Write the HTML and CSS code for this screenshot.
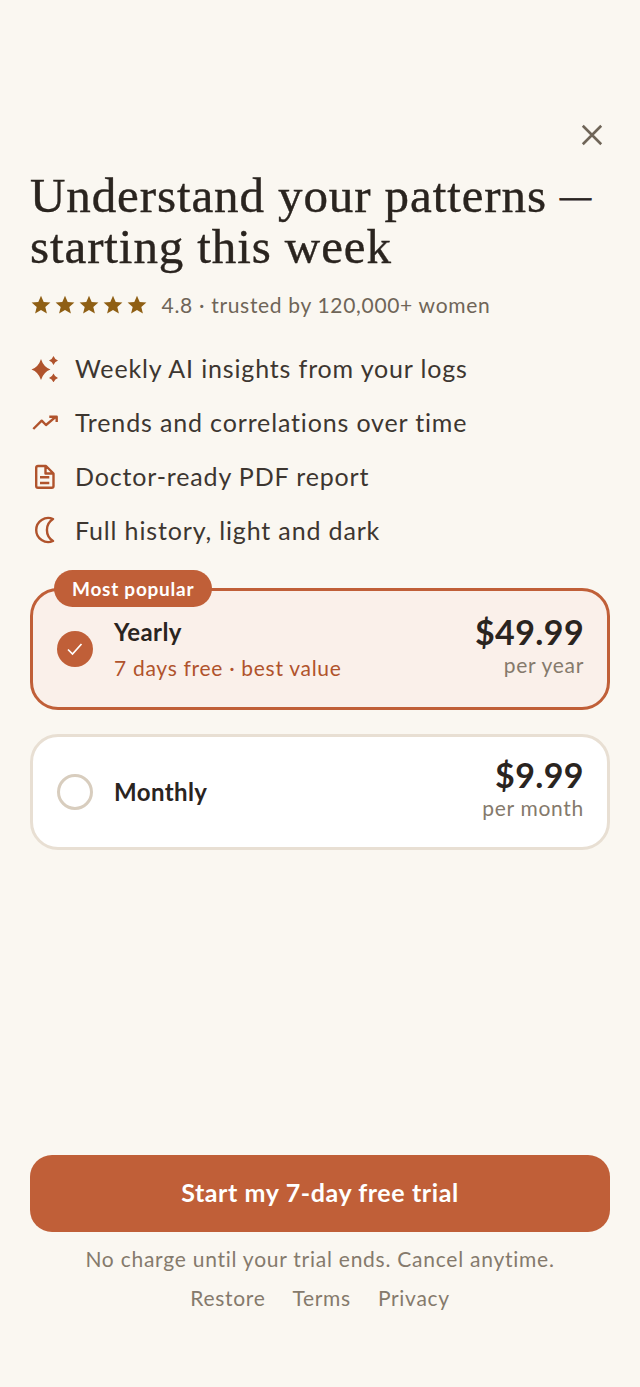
FILE: index.html
```html
<!DOCTYPE html>
<html>
  <head>
    <meta charset="utf-8">
    <title>Paywall</title>
    <link rel="stylesheet" href="styles.css">
  </head>
  <body>
    <div class="screen">
      <div class="close-row">
        <svg class="close" viewBox="0 0 24 24" width="26" height="26"><path d="M3.500 3.500 L20.500 20.500 M20.500 3.500 L3.500 20.500"/></svg>
      </div>
      <h1>Understand your patterns <span class="dash">—</span> starting this week</h1>
      <div class="rating">
        <div class="stars">
          <svg viewBox="0 0 20 20" width="20" height="20"><path d="M10 .8l2.700 6.200 6.700.6-5.100 4.400 1.600 6.600L10 15.100l-5.900 3.500 1.600-6.600L.6 7.600 7.300 7z"/></svg>
          <svg viewBox="0 0 20 20" width="20" height="20"><path d="M10 .8l2.700 6.200 6.700.6-5.100 4.400 1.600 6.600L10 15.100l-5.900 3.500 1.600-6.600L.6 7.600 7.300 7z"/></svg>
          <svg viewBox="0 0 20 20" width="20" height="20"><path d="M10 .8l2.700 6.200 6.700.6-5.100 4.400 1.600 6.600L10 15.100l-5.900 3.500 1.600-6.600L.6 7.600 7.300 7z"/></svg>
          <svg viewBox="0 0 20 20" width="20" height="20"><path d="M10 .8l2.700 6.200 6.700.6-5.100 4.400 1.600 6.600L10 15.100l-5.900 3.500 1.600-6.600L.6 7.600 7.300 7z"/></svg>
          <svg viewBox="0 0 20 20" width="20" height="20"><path d="M10 .8l2.700 6.200 6.700.6-5.100 4.400 1.600 6.600L10 15.100l-5.900 3.500 1.600-6.600L.6 7.600 7.300 7z"/></svg>
        </div>
        <span>4.8 · trusted by 120,000+ women</span>
      </div>
      <ul class="features">
        <li>
          <svg class="icon-fill" viewBox="0 0 28 28" width="28" height="28"><path d="M11 5 Q13.500 13 20.500 15.500 Q13.500 18 11 26 Q8.500 18 1.500 15.500 Q8.500 13 11 5z"/><path d="M23.500 2 Q24.700 5.300 28 6.500 Q24.700 7.700 23.500 11 Q22.300 7.700 19 6.500 Q22.300 5.300 23.500 2z"/><path d="M23.500 19.500 Q24.700 22.800 28 24 Q24.700 25.200 23.500 28.500 Q22.300 25.200 19 24 Q22.300 22.800 23.500 19.500z"/></svg>
          <span>Weekly AI insights from your logs</span>
        </li>
        <li>
          <svg class="icon-line" viewBox="0 0 28 28" width="28" height="28"><path d="M3.300 21 L11.700 12.700 L16 17 L26 8.700 M19.300 8.700 H26.700 V14"/></svg>
          <span>Trends and correlations over time</span>
        </li>
        <li>
          <svg class="icon-line" viewBox="0 0 28 28" width="28" height="28"><path d="M8 4 H16 L23.500 11.500 V24 Q23.500 25.800 21.700 25.800 H8 Q6.200 25.800 6.200 24 V5.800 Q6.200 4 8 4z M15.500 4.500 V11.500 H23 M10 15.300 H19.300 M10 21 H19.300"/></svg>
          <span>Doctor-ready PDF report</span>
        </li>
        <li>
          <svg class="icon-line" viewBox="0 0 28 28" width="28" height="28"><path d="M23 3 A12 12 0 1 0 23 25 A13 13 0 0 1 23 3z"/></svg>
          <span>Full history, light and dark</span>
        </li>
      </ul>
      <div class="plans">
        <div class="plan plan-selected">
          <div class="badge">Most popular</div>
          <div class="radio radio-on">
            <svg viewBox="0 0 16 16" width="16" height="16"><path d="M1 8.500 L5.500 13 L14.500 3"/></svg>
          </div>
          <div class="plan-info">
            <div class="plan-name">Yearly</div>
            <div class="plan-note">7 days free · best value</div>
          </div>
          <div class="plan-price">
            <div class="amount">$49.99</div>
            <div class="period">per year</div>
          </div>
        </div>
        <div class="plan">
          <div class="radio"></div>
          <div class="plan-info">
            <div class="plan-name">Monthly</div>
          </div>
          <div class="plan-price">
            <div class="amount">$9.99</div>
            <div class="period">per month</div>
          </div>
        </div>
      </div>
      <div class="bottom">
        <button class="cta">Start my 7-day free trial</button>
        <p class="fine">No charge until your trial ends. Cancel anytime.</p>
        <div class="links">
          <a>Restore</a>
          <a>Terms</a>
          <a>Privacy</a>
        </div>
      </div>
    </div>
  </body>
</html>
```

FILE: styles.css
```css
html, body {
  margin: 0;
  padding: 0;
  background: #faf7f1;
  font-family: "Lato", sans-serif;
  color: #2a241f;
}

.screen {
  height: 1387px;
  box-sizing: border-box;
  padding: 122px 30px 75px 30px;
  display: flex;
  flex-direction: column;
}

.close-row {
  display: flex;
  justify-content: flex-end;
  padding-right: 5px;
  height: 26px;
}

.close path {
  fill: none;
  stroke: #6f6558;
  stroke-width: 2.4;
}

h1 {
  margin: 22px 0 0 0;
  font-family: "Liberation Serif", serif;
  font-weight: 400;
  font-size: 49px;
  line-height: 51px;
  letter-spacing: .9px;
  -webkit-text-stroke: .4px #2a241f;
}

.dash {
  font-size: 31px;
  letter-spacing: 0;
  vertical-align: 5px;
  line-height: 0;
  -webkit-text-stroke: .8px #2a241f;
}

.rating {
  display: flex;
  align-items: center;
  margin-top: 19px;
  font-size: 21px;
  line-height: 28px;
  letter-spacing: .68px;
  color: #6f6558;
}

.stars {
  display: flex;
  gap: 3.8px;
  margin: 0 15px 0 1.400px;
}

.stars svg {
  fill: #8f5f14;
}

.features {
  list-style: none;
  margin: 22px 0 0 0;
  padding: 0;
}

.features li {
  display: flex;
  align-items: center;
  height: 54px;
  font-size: 25px;
  letter-spacing: .85px;
  color: #3d3630;
}

.features svg {
  flex: none;
  margin-right: 17px;
}

.icon-fill {
  fill: #b0532c;
}

.icon-line path {
  fill: none;
  stroke: #b0532c;
  stroke-width: 2.4;
  stroke-linejoin: round;
}

.plans {
  display: flex;
  flex-direction: column;
  gap: 24px;
  margin-top: 31px;
}

.plan {
  position: relative;
  display: flex;
  align-items: center;
  box-sizing: border-box;
  height: 116px;
  padding: 0 24px;
  background: #fff;
  border: 3px solid #e8dfd3;
  border-radius: 28px;
}

.plan-selected {
  height: 122px;
  background: #faf0ea;
  border-color: #c05f38;
}

.badge {
  position: absolute;
  left: 21px;
  top: -21px;
  height: 37px;
  padding: 0 18px;
  border-radius: 19px;
  background: #c05f38;
  color: #fff;
  font-size: 19px;
  font-weight: 700;
  line-height: 37px;
  letter-spacing: .75px;
}

.radio {
  flex: none;
  box-sizing: border-box;
  width: 36px;
  height: 36px;
  margin-right: 21px;
  border: 3px solid #d8cdbe;
  border-radius: 50%;
}

.radio-on {
  display: flex;
  align-items: center;
  justify-content: center;
  background: #c05f38;
  border: 0;
}

.radio-on path {
  fill: none;
  stroke: #fff;
  stroke-width: 1.7;
}

.plan-info {
  flex: 1;
}

.plan-name {
  font-size: 24px;
  font-weight: 700;
  line-height: 30px;
  letter-spacing: .4px;
}

.plan-note {
  margin-top: 8px;
  font-size: 21px;
  line-height: 26px;
  letter-spacing: .7px;
  color: #b0532c;
}

.plan-price {
  margin-right: -1px;
  padding-bottom: 7px;
  text-align: right;
}

.amount {
  font-size: 34px;
  font-weight: 700;
  line-height: 37px;
  letter-spacing: .4px;
}

.period {
  margin-top: 2px;
  font-size: 21px;
  line-height: 26px;
  letter-spacing: .7px;
  color: #857a6c;
}

.bottom {
  margin-top: auto;
  text-align: center;
}

.cta {
  display: block;
  width: 100%;
  height: 77px;
  padding: 0 0 3px 0;
  border: 0;
  border-radius: 22px;
  background: #c05f38;
  color: #fff;
  font-family: inherit;
  font-size: 25px;
  font-weight: 700;
  letter-spacing: .6px;
}

.fine {
  margin: 13px 0 0 0;
  font-size: 21px;
  line-height: 28px;
  letter-spacing: .75px;
  color: #857a6c;
}

.links {
  display: flex;
  justify-content: center;
  gap: 27px;
  margin-top: 11px;
  font-size: 21px;
  line-height: 28px;
  letter-spacing: .7px;
  color: #857a6c;
}
```
